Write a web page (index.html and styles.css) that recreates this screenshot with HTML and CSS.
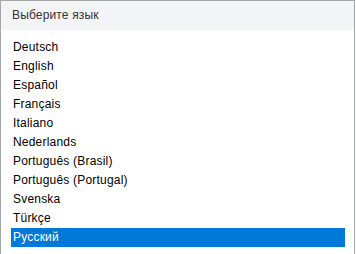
FILE: index.html
```html
<!DOCTYPE html>
<html lang="ru">
<head>
<meta charset="utf-8">
<link rel="stylesheet" href="styles.css">
</head>
<body>
<div class="panel">
  <div class="panel-header">Выберите язык</div>
  <ul class="lang-list">
    <li class="lang-item">Deutsch</li>
    <li class="lang-item">English</li>
    <li class="lang-item">Español</li>
    <li class="lang-item">Français</li>
    <li class="lang-item">Italiano</li>
    <li class="lang-item">Nederlands</li>
    <li class="lang-item">Português (Brasil)</li>
    <li class="lang-item">Português (Portugal)</li>
    <li class="lang-item">Svenska</li>
    <li class="lang-item">Türkçe</li>
    <li class="lang-item is-selected">Русский</li>
  </ul>
</div>
</body>
</html>
```

FILE: styles.css
```css
html, body {
  margin: 0;
  padding: 0;
  background: #ffffff;
}

body {
  font-family: "Liberation Sans", Arial, sans-serif;
  font-size: 12px;
  color: #000000;
}

.panel {
  width: 353px;
  height: 260px;
  border: 1px solid #a3a8ad;
  border-bottom: none;
  background: #ffffff;
}

.panel-header {
  height: 29px;
  line-height: 29px;
  padding-left: 11px;
  background: #f3f4f6;
  color: #333333;
  letter-spacing: 0.15px;
}

.lang-list {
  list-style: none;
  margin: 0 0 0 10px;
  padding: 8px 0 0 0;
  width: 334px;
}

.lang-item {
  height: 19px;
  line-height: 19px;
  padding-left: 2px;
  white-space: nowrap;
  letter-spacing: 0.2px;
}

.lang-item.is-selected {
  background: #0078d7;
  color: #ffffff;
}
```
